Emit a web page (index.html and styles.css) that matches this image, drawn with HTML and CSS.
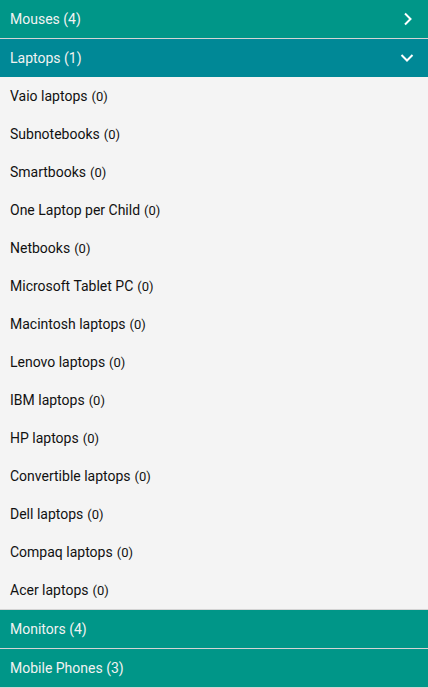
FILE: index.html
```html
<!DOCTYPE html>
<html>
<head>
<meta charset="utf-8">
<link rel="stylesheet" href="styles.css">
</head>
<body>
<div class="accordion">
  <div class="head">
    <span class="title">Mouses (4)</span>
    <svg class="chev" width="12" height="14" viewBox="0 0 12 14"><path d="M3 1.5 L8.5 7 L3 12.5" fill="none" stroke="#fff" stroke-width="2"/></svg>
  </div>
  <div class="head active">
    <span class="title">Laptops (1)</span>
    <svg class="chev" width="14" height="10" viewBox="0 0 14 10"><path d="M1.5 2 L7 7.5 L12.5 2" fill="none" stroke="#fff" stroke-width="2"/></svg>
  </div>
  <ul class="list">
    <li>Vaio laptops <span class="count">(0)</span></li>
    <li>Subnotebooks <span class="count">(0)</span></li>
    <li>Smartbooks <span class="count">(0)</span></li>
    <li>One Laptop per Child <span class="count">(0)</span></li>
    <li>Netbooks <span class="count">(0)</span></li>
    <li>Microsoft Tablet PC <span class="count">(0)</span></li>
    <li>Macintosh laptops <span class="count">(0)</span></li>
    <li>Lenovo laptops <span class="count">(0)</span></li>
    <li>IBM laptops <span class="count">(0)</span></li>
    <li>HP laptops <span class="count">(0)</span></li>
    <li>Convertible laptops <span class="count">(0)</span></li>
    <li>Dell laptops <span class="count">(0)</span></li>
    <li>Compaq laptops <span class="count">(0)</span></li>
    <li>Acer laptops <span class="count">(0)</span></li>
  </ul>
  <div class="head">
    <span class="title">Monitors (4)</span>
  </div>
  <div class="head">
    <span class="title">Mobile Phones (3)</span>
  </div>
</div>
</body>
</html>
```

FILE: styles.css
```css
html, body {
  margin: 0;
  padding: 0;
  background: #ffffff;
}
body {
  font-family: Roboto, "Liberation Sans", sans-serif;
}
.accordion {
  width: 428px;
}
.head {
  height: 38px;
  background: #009688;
  color: #f2f2f2;
  font-size: 14px;
  display: flex;
  align-items: center;
  justify-content: space-between;
  padding: 0 14px 0 10px;
  border-bottom: 1px solid #d4d4d4;
}
.head.active {
  background: #008896;
  border-bottom: none;
}
.chev {
  display: block;
}
.list {
  list-style: none;
  margin: 0;
  padding: 0;
  background: #f4f4f4;
  border-bottom: 1px solid #d4d4d4;
}
.list li {
  height: 38px;
  display: flex;
  align-items: center;
  gap: 4px;
  padding-left: 10px;
  font-size: 14px;
  color: #111;
}
.count {
  font-size: 13px;
}
```
